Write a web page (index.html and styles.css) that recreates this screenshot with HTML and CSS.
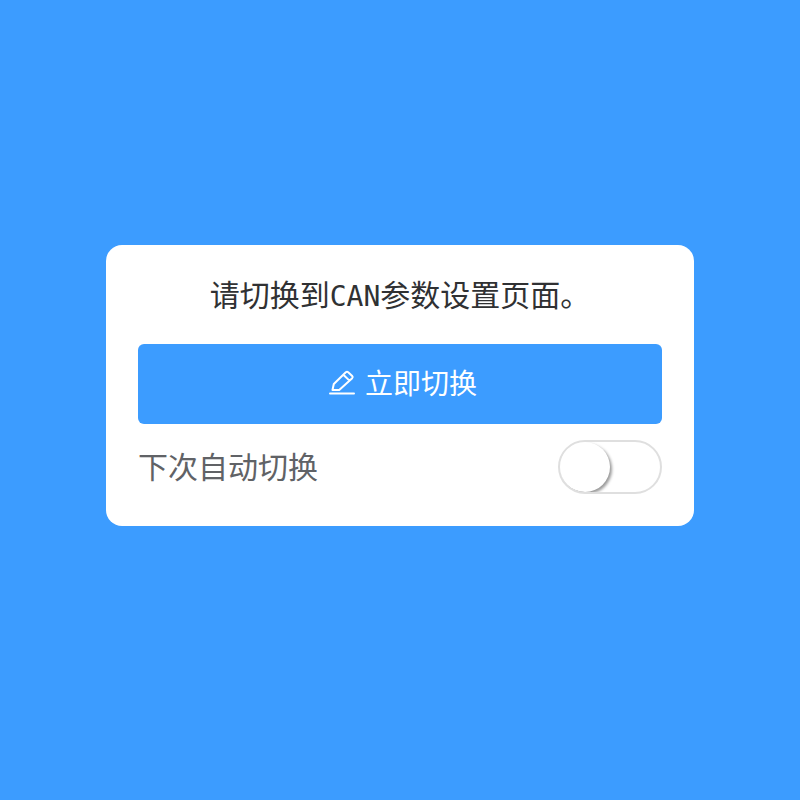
FILE: index.html
```html
<!DOCTYPE html>
<html lang="zh-CN">
<head>
<meta charset="utf-8">
<meta name="viewport" content="width=device-width, initial-scale=1">
<title>CAN参数设置</title>
<link rel="stylesheet" href="styles.css">
</head>
<body>
<main class="card">
  <h1 class="title">请切换到<span class="latin">CAN</span>参数设置页面。</h1>
  <button class="switch-now" type="button">
    <svg class="icon" viewBox="0 0 32 32" aria-hidden="true">
      <path d="M9.5 22L10.8 16L22.8 4.3Q24 3.3 25.2 4.3L29.2 8Q30.2 9.1 29.2 10.2L16.2 22ZM20.6 7L26.2 12.4"/>
      <path d="M7 25.5H31"/>
    </svg>
    <span class="button-text">立即切换</span>
  </button>
  <div class="option">
    <label class="option-label" for="auto">下次自动切换</label>
    <input class="toggle" id="auto" type="checkbox" role="switch">
  </div>
</main>
</body>
</html>
```
FILE: styles.css
```css
* {
  box-sizing: border-box;
}

body {
  display: flex;
  align-items: center;
  justify-content: center;
  min-height: 100vh;
  margin: 0;
  padding: 0 16px 29px;
  background: #3c9cff;
  font-family: "Noto Sans CJK SC", sans-serif;
}

.card {
  width: 100%;
  max-width: 588px;
  padding: 32px;
  border-radius: 16px;
  background: #fff;
}

.title {
  margin: 0 0 35px;
  color: #303133;
  font-size: 30px;
  font-weight: 400;
  line-height: 32px;
  text-align: center;
}

.latin {
  font-family: "DejaVu Sans Mono", monospace;
  font-size: 28px;
  line-height: 0;
}

.switch-now {
  display: flex;
  align-items: center;
  justify-content: center;
  gap: 10px;
  width: 100%;
  height: 80px;
  margin: 0 0 16px;
  padding: 0;
  border: 0;
  border-radius: 6px;
  background: #3c9cff;
  color: #fff;
  font: inherit;
  font-size: 28px;
  line-height: 32px;
  cursor: pointer;
}

.button-text,
.option-label {
  padding-bottom: 4px;
}

.icon {
  width: 32px;
  height: 32px;
  fill: none;
  stroke: currentColor;
  stroke-width: 2;
  stroke-linecap: round;
  stroke-linejoin: round;
}

.option {
  display: flex;
  align-items: center;
  justify-content: space-between;
}

.option-label {
  color: #606266;
  font-size: 30px;
  line-height: 32px;
}

.toggle {
  appearance: none;
  width: 104px;
  height: 54px;
  margin: 0;
  overflow: hidden;
  border: 2px solid #dfdfdf;
  border-radius: 27px;
  background: #fff;
  cursor: pointer;
}

.toggle::before {
  content: "";
  display: block;
  width: 50px;
  height: 50px;
  border-radius: 50%;
  background: #fff;
  box-shadow: 2px 2px 3px rgba(0, 0, 0, 0.4);
}

.toggle:checked {
  border-color: #3c9cff;
  background: #3c9cff;
}

.toggle:checked::before {
  margin-left: auto;
}
```
